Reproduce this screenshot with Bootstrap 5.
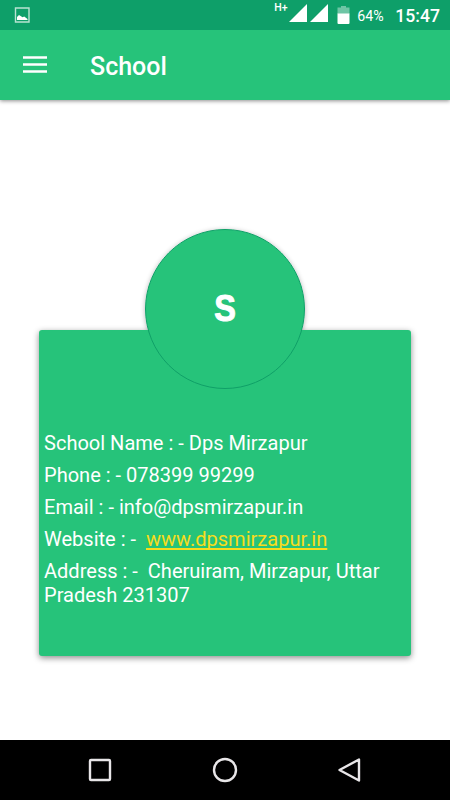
<!DOCTYPE html>
<html lang="en">
<head>
  <meta charset="UTF-8">
  <meta name="viewport" content="width=device-width, initial-scale=1">
  <title>School</title>
  <link href="https://cdn.jsdelivr.net/npm/bootstrap@5.3.3/dist/css/bootstrap.min.css" rel="stylesheet">
  <style>
    body {
      font-family: Roboto, sans-serif;
      background-color: #fff;
      height: 100vh;
      overflow: hidden;
    }
    svg {
      display: block;
      flex: none;
    }
    .status-bar {
      height: 30px;
      background-color: #0e9f69;
      padding: 0 10px 0 14px;
      z-index: 1;
    }
    .network-type {
      font-size: 10.5px;
      font-weight: 500;
      line-height: 10px;
      margin: 3px 2px 0 0;
      width: 13px;
      white-space: nowrap;
    }
    .battery-level {
      font-size: 14.2px;
      line-height: 30px;
      margin: 1px 0 0 7px;
      width: 38px;
    }
    .clock {
      font-size: 17.6px;
      font-weight: 500;
      line-height: 30px;
      margin-top: 1px;
    }
    .app-bar {
      height: 70px;
      background-color: #26c37a;
      padding: 0 23px;
      box-shadow: 0 1px 4px rgba(0, 0, 0, .45);
    }
    .app-title {
      font-size: 25px;
      font-weight: 500;
      line-height: 30px;
      margin: 4px 0 0 43px;
    }
    .page-content {
      padding: 230px 39px 0;
    }
    .school-card {
      height: 326px;
      background-color: #26c37a;
      border-radius: 3px;
      padding: 101px 5px 0;
      font-size: 20.05px;
      line-height: 24px;
      box-shadow: 0 2px 6px rgba(0, 0, 0, .45);
    }
    .school-card p {
      margin-bottom: 8px;
    }
    .school-card a {
      color: #f8dc1c;
      text-decoration-thickness: 1.5px;
      text-decoration-skip-ink: none;
      text-underline-offset: 2px;
    }
    .avatar {
      top: -101px;
      width: 160px;
      height: 160px;
      background-color: #26c37a;
      border: 1px solid #10a068;
      font: 700 36px/1 "Liberation Sans", sans-serif;
    }
    .avatar-letter {
      transform: scaleX(.9);
      -webkit-text-stroke: 1px #fff;
    }
    .avatar-shadow {
      top: -101px;
      width: 160px;
      height: 160px;
      box-shadow: 0 1px 5px rgba(0, 0, 0, .3);
      z-index: -1;
    }
    .nav-keys {
      height: 60px;
      padding: 0 87px;
    }
  </style>
</head>
<body class="d-flex flex-column">

  <div class="status-bar d-flex text-white position-relative">
    <svg class="me-auto" width="16" height="30" viewBox="0 0 16 30">
      <path d="M1.500 8h13.500v14h-13.500z" fill="none" stroke="#b9e3d2" stroke-width="1.400"/>
      <path d="M3 20V17L5 15l2 1.300 1.500 1 1.700-.800L13.500 19v1z" fill="#fff"/>
    </svg>
    <span class="network-type">H+</span>
    <svg width="40" height="30" viewBox="0 0 40 30">
      <path d="M0 22L18 4V22zM21 22L39 4V22z" fill="#fff"/>
    </svg>
    <svg class="ms-2" width="13" height="30" viewBox="0 0 13 30">
      <path d="M4 6h5v1.500h3.500V14H.5V7.500H4z" fill="#6ec5a5"/>
      <path d="M.5 13.500h12V23q0 1-1 1h-10q-1 0-1-1z" fill="#fff"/>
    </svg>
    <span class="battery-level">64%</span>
    <span class="clock">15:47</span>
  </div>

  <nav class="app-bar d-flex align-items-center text-white">
    <svg width="24" height="18" viewBox="0 0 24 18">
      <path d="M0 1.500h24M0 8.500h24M0 15.500h24" stroke="#fff" stroke-width="2.600"/>
    </svg>
    <h1 class="app-title">School</h1>
  </nav>

  <main class="page-content flex-grow-1">
    <div class="school-card position-relative text-white">
      <div class="avatar-shadow position-absolute start-50 translate-middle-x rounded-circle"></div>
      <div class="avatar position-absolute start-50 translate-middle-x rounded-circle d-flex align-items-center justify-content-center">
        <span class="avatar-letter">S</span>
      </div>
      <p>School Name : - Dps Mirzapur</p>
      <p>Phone : - 078399 99299</p>
      <p>Email : - info@dpsmirzapur.in</p>
      <p>Website : - &nbsp;<a href="#">www.dpsmirzapur.in</a></p>
      <p>Address : - &nbsp;Cheruiram, Mirzapur, Uttar Pradesh 231307</p>
    </div>
  </main>

  <footer class="nav-keys d-flex align-items-center justify-content-between bg-black">
    <svg width="26" height="26" viewBox="0 0 26 26" fill="none" stroke="#e8e6e8" stroke-width="2.400">
      <rect x="3" y="3" width="20" height="20" rx="1"/>
    </svg>
    <svg width="26" height="26" viewBox="0 0 26 26" fill="none" stroke="#e8e6e8" stroke-width="2.400">
      <circle cx="13" cy="13" r="11"/>
    </svg>
    <svg width="26" height="26" viewBox="0 0 26 26" fill="none" stroke="#e8e6e8" stroke-width="2.400" stroke-linejoin="round">
      <path d="M22 2.500V23.500L2.500 13z"/>
    </svg>
  </footer>

  <script src="https://cdn.jsdelivr.net/npm/bootstrap@5.3.3/dist/js/bootstrap.bundle.min.js"></script>
</body>
</html>
